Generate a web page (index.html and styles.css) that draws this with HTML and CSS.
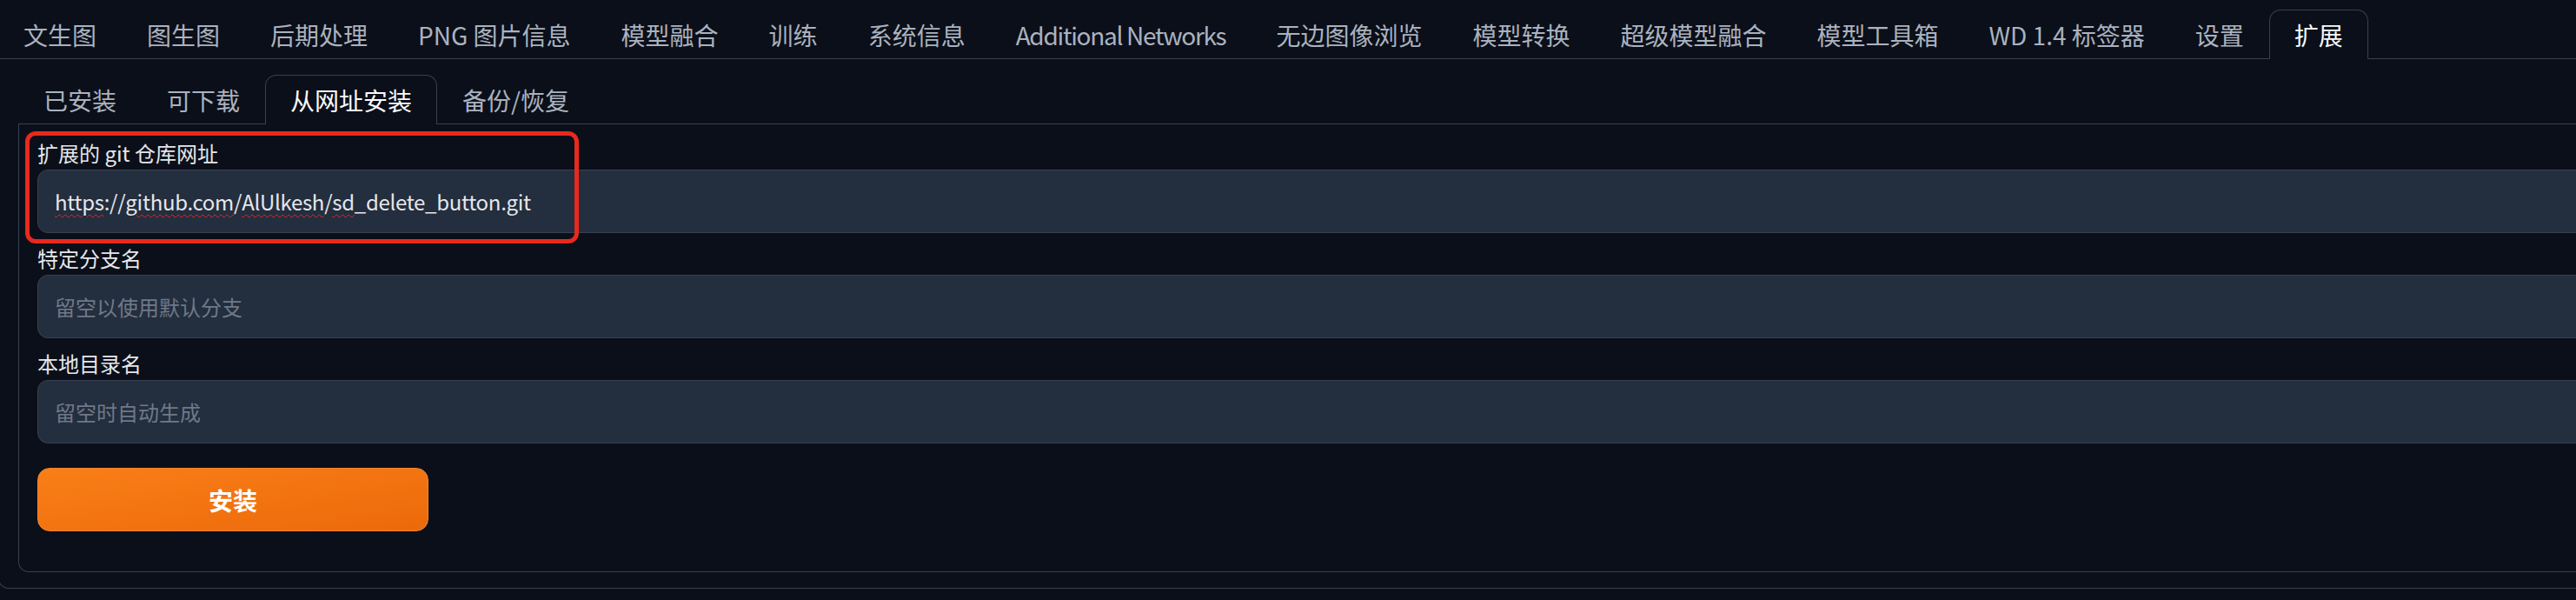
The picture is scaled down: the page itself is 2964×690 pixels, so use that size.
FILE: index.html
```html
<!DOCTYPE html>
<html lang="zh-CN">
<head>
<meta charset="utf-8">
<title>扩展</title>
<link rel="stylesheet" href="styles.css">
</head>
<body>
<div class="app">
  <nav class="tabs-nav">
    <div class="tab">文生图</div>
    <div class="tab">图生图</div>
    <div class="tab">后期处理</div>
    <div class="tab">PNG 图片信息</div>
    <div class="tab">模型融合</div>
    <div class="tab">训练</div>
    <div class="tab">系统信息</div>
    <div class="tab condensed">Additional Networks</div>
    <div class="tab">无边图像浏览</div>
    <div class="tab">模型转换</div>
    <div class="tab">超级模型融合</div>
    <div class="tab">模型工具箱</div>
    <div class="tab">WD 1.4 标签器</div>
    <div class="tab">设置</div>
    <div class="tab selected">扩展</div>
  </nav>
  <section class="outer-panel">
    <nav class="tabs-nav">
      <div class="tab">已安装</div>
      <div class="tab">可下载</div>
      <div class="tab selected">从网址安装</div>
      <div class="tab">备份/恢复</div>
    </nav>
    <div class="inner-panel">
      <div class="field highlighted">
        <div class="label">扩展的 git 仓库网址</div>
        <div class="input url"><span class="misspelled">https</span>://<span class="misspelled">github.com</span>/<span class="misspelled">AlUlkesh</span>/<span class="misspelled">sd</span>_delete_button.git</div>
        <div class="annotation"></div>
      </div>
      <div class="field">
        <div class="label">特定分支名</div>
        <div class="input"><span class="placeholder">留空以使用默认分支</span></div>
      </div>
      <div class="field">
        <div class="label">本地目录名</div>
        <div class="input"><span class="placeholder">留空时自动生成</span></div>
      </div>
      <button class="primary-btn">安装</button>
    </div>
  </section>
</div>
</body>
</html>
```

FILE: styles.css
```css
html, body {
  margin: 0;
  padding: 0;
  overflow: hidden;
  background: #0b0f19;
}

body {
  font-family: "Noto Sans CJK SC", "Noto Sans", sans-serif;
  color: #e5e7eb;
}

.app {
  width: 3200px;
  margin-left: -2px;
  padding-top: 11px;
}

.tabs-nav {
  display: flex;
  border-bottom: 1px solid #374151;
}

.tab {
  box-sizing: border-box;
  height: 56px;
  padding: 0 28px;
  border: 1px solid transparent;
  border-bottom: none;
  display: flex;
  align-items: center;
  font-size: 28px;
  color: #aab2bf;
  white-space: nowrap;
}

.tab.condensed {
  letter-spacing: -1.3px;
}

.tab.selected {
  height: 57px;
  margin-bottom: -1px;
  border-color: #374151;
  border-radius: 13px 13px 0 0;
  background: #0b0f19;
  color: #f9fafb;
}

.outer-panel {
  border: 1px solid #374151;
  border-top: none;
  border-radius: 0 0 12px 12px;
  padding: 18px 21px 18px 22px;
}

.inner-panel {
  border: 1px solid #374151;
  border-top: none;
  border-radius: 0 0 12px 12px;
  padding: 18px 21px 46px 21px;
  display: flex;
  flex-direction: column;
  align-items: flex-start;
}

.field {
  width: 100%;
  display: flex;
  flex-direction: column;
  gap: 4px;
  margin-bottom: 14px;
}

.highlighted {
  position: relative;
}

.label {
  font-size: 24px;
  line-height: 30px;
  color: #e5e7eb;
}

.input {
  box-sizing: border-box;
  height: 73px;
  display: flex;
  align-items: center;
  padding: 0 19px;
  background: #232e3e;
  border: 1px solid #374151;
  border-radius: 12px;
  font-size: 24px;
  color: #e5e7eb;
  white-space: pre;
}

.input.url {
  letter-spacing: -0.3px;
}

.misspelled {
  text-decoration: underline wavy #e0262a;
  text-decoration-thickness: 1px;
  text-underline-offset: 4px;
}

.placeholder {
  color: #6f7988;
}

.annotation {
  position: absolute;
  left: -14px;
  top: -10px;
  width: 637px;
  height: 129px;
  box-sizing: border-box;
  border: 5px solid #e8291d;
  border-radius: 12px;
  pointer-events: none;
}

.primary-btn {
  margin-top: 14px;
  width: 450px;
  height: 73px;
  border: 1px solid #f3852e;
  border-radius: 14px;
  background: linear-gradient(to bottom right, #f97f18, #ec690a);
  color: #ffffff;
  font-family: "Noto Sans CJK SC", "Noto Sans", sans-serif;
  font-size: 28px;
  font-weight: 700;
}
```
